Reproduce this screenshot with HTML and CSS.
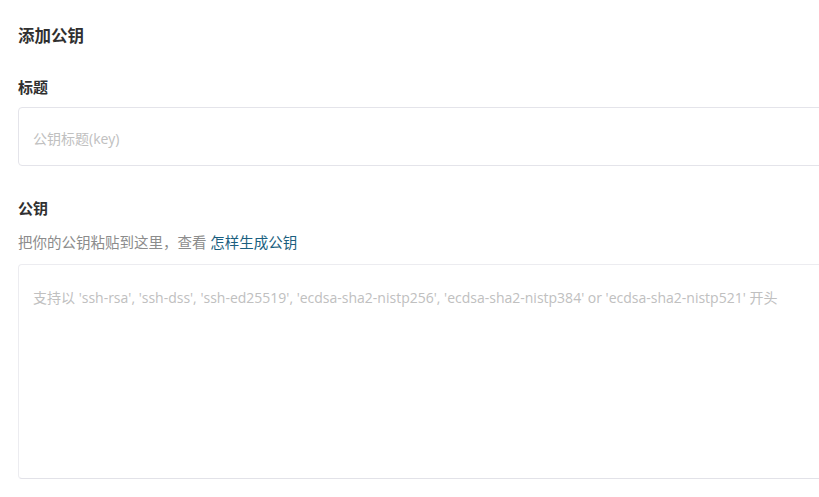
FILE: index.html
```html
<!DOCTYPE html>
<html lang="zh-CN">
<head>
  <meta charset="UTF-8">
  <meta name="viewport" content="width=device-width, initial-scale=1.0">
  <title>添加公钥</title>
  <link rel="stylesheet" href="styles.css">
</head>
<body>

<!-- 添加公钥表单 -->
<section class="key-form">
  <h2 class="key-form__title">添加公钥</h2>

  <div class="field field--title">
    <label for="key-title">标题</label>
    <input type="text" id="key-title" name="title" placeholder="公钥标题(key)">
  </div>

  <div class="field field--key">
    <label for="key-body">公钥</label>
    <p class="field__help">把你的公钥粘贴到这里，查看 <a href="#">怎样生成公钥</a></p>
    <textarea id="key-body" name="key" placeholder="支持以 'ssh-rsa', 'ssh-dss', 'ssh-ed25519', 'ecdsa-sha2-nistp256', 'ecdsa-sha2-nistp384' or 'ecdsa-sha2-nistp521' 开头"></textarea>
  </div>
</section>

</body>
</html>
```

FILE: styles.css
```css
/* Общий стиль */
body {
  margin: 0;
  padding: 0;
  background-color: #ffffff;
  font-family: "Open Sans", "Noto Sans CJK SC", sans-serif;
  color: #333333;
  overflow: hidden;
}

.key-form {
  width: 880px;
  padding: 25px 0 0 18px;
}

.key-form__title {
  margin: 0 0 29px 0;
  font-size: 16.5px;
  line-height: 22px;
  font-weight: bold;
  color: #303030;
}

/* Поля */
.field label {
  display: block;
  font-size: 15px;
  line-height: 22px;
  font-weight: bold;
  color: #303030;
}

.field--title label {
  margin-bottom: 9px;
}

.field--title {
  margin-bottom: 31px;
}

.field input,
.field textarea {
  display: block;
  width: 100%;
  box-sizing: border-box;
  margin: 0;
  border: 1px solid #e4e4ea;
  border-radius: 4px;
  background-color: #ffffff;
  font-family: "Open Sans", "Noto Sans CJK SC", sans-serif;
  font-size: 14px;
  line-height: 22px;
  color: #333333;
  outline: none;
}

.field input {
  height: 59px;
  padding: 4px 14px 0 14px;
}

.field textarea {
  height: 215px;
  padding: 22px 14px;
  resize: none;
  border-color: #ececf0;
  border-bottom-color: #e2e2e8;
}

.field input::placeholder,
.field textarea::placeholder {
  color: #c0c0c0;
}

.field__help {
  margin: 13px 0 10px 0;
  font-size: 14.5px;
  line-height: 22px;
  color: #8c8c8c;
}

.field__help a {
  color: #1b5f80;
  text-decoration: none;
}
```
